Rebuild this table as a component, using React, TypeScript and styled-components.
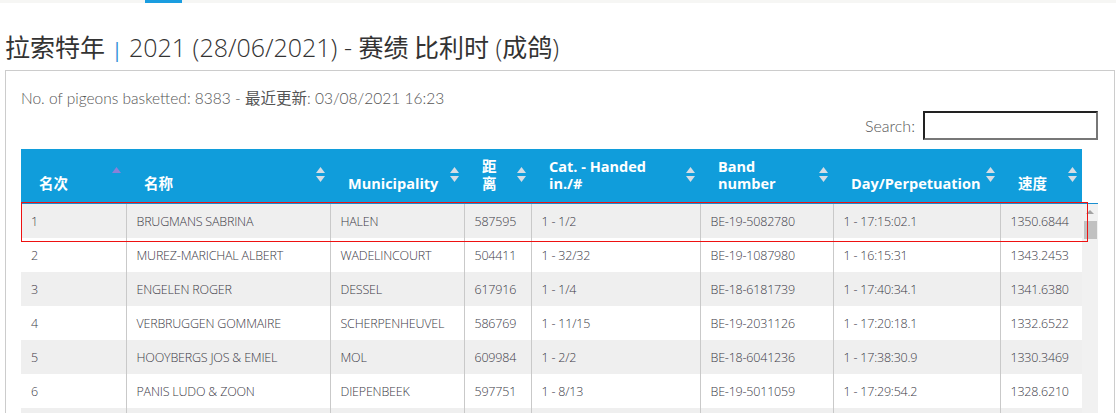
import React from 'react';
import styled, { createGlobalStyle } from 'styled-components';

const GlobalStyle = createGlobalStyle`
    body {
        margin: 0;
        background: #ffffff;
        font-family: "Open Sans", "Noto Sans CJK SC", sans-serif;
        color: #333;
        overflow: hidden;
    }
`;

type Row = {
    rank: string;
    name: string;
    city: string;
    dist: string;
    cat: string;
    band: string;
    time: string;
    speed: string;
};

const rows: Row[] = [
    { rank: '1', name: 'BRUGMANS SABRINA', city: 'HALEN', dist: '587595', cat: '1 - 1/2', band: 'BE-19-5082780', time: '1 - 17:15:02.1', speed: '1350.6844' },
    { rank: '2', name: 'MUREZ-MARICHAL ALBERT', city: 'WADELINCOURT', dist: '504411', cat: '1 - 32/32', band: 'BE-19-1087980', time: '1 - 16:15:31', speed: '1343.2453' },
    { rank: '3', name: 'ENGELEN ROGER', city: 'DESSEL', dist: '617916', cat: '1 - 1/4', band: 'BE-18-6181739', time: '1 - 17:40:34.1', speed: '1341.6380' },
    { rank: '4', name: 'VERBRUGGEN GOMMAIRE', city: 'SCHERPENHEUVEL', dist: '586769', cat: '1 - 11/15', band: 'BE-19-2031126', time: '1 - 17:20:18.1', speed: '1332.6522' },
    { rank: '5', name: 'HOOYBERGS JOS & EMIEL', city: 'MOL', dist: '609984', cat: '1 - 2/2', band: 'BE-18-6041236', time: '1 - 17:38:30.9', speed: '1330.3469' },
    { rank: '6', name: 'PANIS LUDO & ZOON', city: 'DIEPENBEEK', dist: '597751', cat: '1 - 8/13', band: 'BE-19-5011059', time: '1 - 17:29:54.2', speed: '1328.6210' },
    { rank: '', name: '', city: '', dist: '', cat: '', band: '', time: '', speed: '' },
];

const widths = [105, 204, 134, 67, 169, 133, 167, 82];

type Col = { label: React.ReactNode; active?: boolean };

const cols: Col[] = [
    { label: '名次', active: true },
    { label: '名称' },
    { label: 'Municipality' },
    { label: <>距<br />离</> },
    { label: <>Cat. - Handed<br />in./#</> },
    { label: <>Band<br />number</> },
    { label: 'Day/Perpetuation' },
    { label: '速度' },
];

function SortIcon({ active }: { active?: boolean }) {
    return (
        <SortSvg width="9" height="15" viewBox="0 0 9 15">
            <path d="M4.5 0 L9 6 L0 6 Z" fill={active ? '#8a80d8' : '#d7dde4'} />
            {!active && <path d="M0 9 L9 9 L4.5 15 Z" fill="#d7dde4" />}
        </SortSvg>
    );
}

function App() {
    return (
        <Page>
            <GlobalStyle />
            <TopBar>
                <TabMark />
            </TopBar>
            <Title>
                <Cjk>拉索特年</Cjk> <Sep>|</Sep> 2021 (28/06/2021) - <Cjk>赛绩 比利时</Cjk> (<Cjk>成鸽</Cjk>)
            </Title>
            <Panel>
                <Info>No. of pigeons basketted: 8383 - <Cjk>最近更新</Cjk>: 03/08/2021 16:23</Info>
                <SearchRow>
                    <SearchLabel>Search:</SearchLabel>
                    <SearchInput type="text" />
                </SearchRow>
                <HeadTable>
                    <colgroup>
                        {widths.map((w, i) => <col key={i} style={{ width: w }} />)}
                    </colgroup>
                    <thead>
                        <tr>
                            {cols.map((c, i) => (
                                <HeadCell key={i}>
                                    <HeadInner>
                                        <HeadLabel>{c.label}</HeadLabel>
                                        <SortIcon active={c.active} />
                                    </HeadInner>
                                </HeadCell>
                            ))}
                        </tr>
                    </thead>
                </HeadTable>
                <BodyWrap>
                    <BodyTable>
                        <colgroup>
                            {widths.map((w, i) => <col key={i} style={{ width: w }} />)}
                        </colgroup>
                        <tbody>
                            {rows.map((r, i) => (
                                <BodyRow key={i} $odd={i % 2 === 0}>
                                    <Cell>{r.rank}</Cell>
                                    <Cell>{r.name}</Cell>
                                    <Cell>{r.city}</Cell>
                                    <Cell>{r.dist}</Cell>
                                    <Cell>{r.cat}</Cell>
                                    <Cell>{r.band}</Cell>
                                    <Cell>{r.time}</Cell>
                                    <Cell>{r.speed}</Cell>
                                </BodyRow>
                            ))}
                        </tbody>
                    </BodyTable>
                    <ScrollTrack>
                        <ScrollArrow />
                        <ScrollThumb />
                    </ScrollTrack>
                    <Highlight />
                </BodyWrap>
            </Panel>
        </Page>
    );
}

const Page = styled.div`
    padding: 0 1px 0 5px;
`
const TopBar = styled.div`
    display: flex;
    height: 3px;
    margin-left: -5px;
    margin-right: -1px;
    padding-left: 145px;
    background: #f6f6f4;
`
const TabMark = styled.div`
    width: 37px;
    height: 3px;
    background: #1a9de0;
`
const Title = styled.h1`
    height: 30px;
    margin: 29px 0 8px 0;
    font-size: 25px;
    line-height: 30px;
    font-weight: 300;
    color: #333;
    white-space: nowrap;
`
const Cjk = styled.span`
    font-family: "Noto Sans CJK SC", sans-serif;
    font-weight: 400;
    line-height: 1;
`
const Sep = styled.span`
    color: #2a8ed6;
    font-size: 20px;
    font-weight: 400;
`
const Panel = styled.div`
    border: 1px solid #cccccc;
    border-bottom: none;
    padding: 17px 16px 0 15px;
    height: 400px;
`
const Info = styled.div`
    font-family: Lato, "Noto Sans CJK SC", sans-serif;
    font-size: 15.5px;
    line-height: 20px;
    font-weight: 300;
    color: #555;
`
const SearchRow = styled.div`
    display: flex;
    justify-content: flex-end;
    align-items: center;
    gap: 8px;
    margin-top: 3px;
`
const SearchLabel = styled.label`
    font-family: Lato, sans-serif;
    font-size: 16px;
    font-weight: 300;
    color: #555;
`
const SearchInput = styled.input`
    box-sizing: border-box;
    width: 175px;
    height: 29px;
    border: 2px solid;
    border-color: #222 #777 #777 #222;
    background: #fff;
    padding: 0 4px;
`
const HeadTable = styled.table`
    margin-top: 9px;
    width: 1061px;
    table-layout: fixed;
    border-collapse: collapse;
    background: #109ddb;
    border-bottom: 1px solid #1b1b1b;
`
const HeadCell = styled.th`
    height: 43px;
    padding: 0 5px 10px 18px;
    vertical-align: bottom;
    text-align: left;
    color: #ffffff;
    font-size: 14.5px;
    font-weight: 700;
    line-height: 17px;
`
const HeadInner = styled.div`
    display: flex;
    justify-content: space-between;
    align-items: flex-end;
    gap: 4px;
`
const HeadLabel = styled.span`
    white-space: nowrap;
`
const SortSvg = styled.svg`
    flex: none;
    margin-bottom: 10px;
`
const BodyWrap = styled.div`
    position: relative;
    display: flex;
    width: 1077px;
    border-top: 1px solid #1a8fd0;
`
const BodyTable = styled.table`
    width: 1061px;
    table-layout: fixed;
    border-collapse: collapse;
`
const BodyRow = styled.tr<{ $odd: boolean }>`
    background: ${p => (p.$odd ? '#efefef' : '#ffffff')};
`
const Cell = styled.td`
    height: 34px;
    padding: 0 0 0 10px;
    font-size: 12.5px;
    letter-spacing: -0.2px;
    font-weight: 300;
    color: #3d3b47;
    white-space: nowrap;
    border-right: 1px solid #c9c9c9;
    &:last-child {
        border-right: none;
    }
`
const ScrollTrack = styled.div`
    display: flex;
    flex-direction: column;
    align-items: center;
    width: 16px;
    background: #f1f1f1;
`
const ScrollArrow = styled.div`
    margin-top: 6px;
    width: 0;
    height: 0;
    border-left: 4px solid transparent;
    border-right: 4px solid transparent;
    border-bottom: 4px solid #a3a3a3;
`
const ScrollThumb = styled.div`
    margin-top: 7px;
    width: 13px;
    height: 18px;
    background: #c1c1c1;
`
const Highlight = styled.div`
    position: absolute;
    top: -2px;
    left: 0;
    width: 1065px;
    height: 38px;
    border: 1px solid #ee1111;
    pointer-events: none;
`

export default App;
